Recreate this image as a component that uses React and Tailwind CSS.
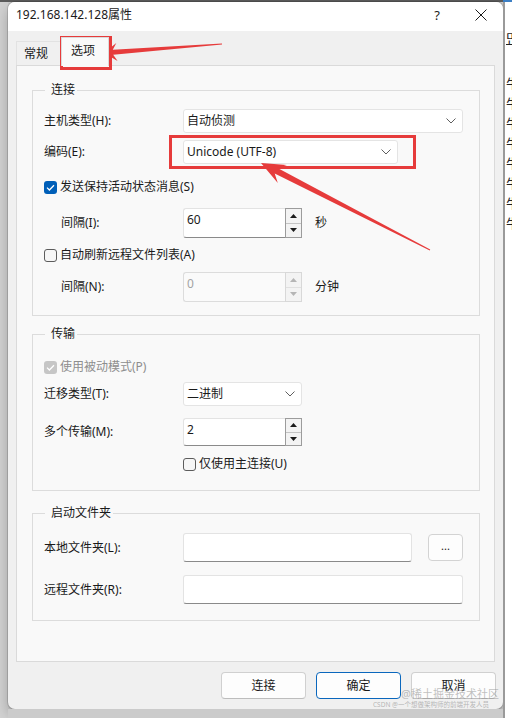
import React from "react";

const Chevron = () => (
  <svg width="10" height="6" viewBox="0 0 10 6" className="shrink-0">
    <path d="M0.5 0.5 L5 5 L9.5 0.5" fill="none" stroke="#5f5f5f" strokeWidth="1" />
  </svg>
);

const Combo = ({ value, className }) => (
  <div
    className={`h-[24px] flex items-center justify-between bg-white border border-[#e4e4e4] rounded-[3px] pl-[3px] pr-[6px] ${className}`}
  >
    <span>{value}</span>
    <Chevron />
  </div>
);

const Tri = ({ up, color }) => (
  <svg width="7" height="4" viewBox="0 0 7 4">
    <path d={up ? "M0 4 L3.5 0 L7 4Z" : "M0 0 L3.5 4 L7 0Z"} fill={color} />
  </svg>
);

const Spinner = ({ value, disabled, className }) => (
  <div className={`flex w-[119px] ${className}`}>
    <div
      className={`flex-1 border border-r-0 rounded-l-[3px] pl-[3px] pt-[3px] ${
        disabled
          ? "bg-[#fafafa] border-[#dcdcdc] text-[#a3a3a3]"
          : "bg-white border-[#e3e3e3] border-b-[#8a8a8a]"
      }`}
    >
      {value}
    </div>
    <div
      className={`w-[17px] flex flex-col border bg-[#f3f3f3] ${
        disabled ? "border-[#d8d8d8]" : "border-[#9c9c9c]"
      }`}
    >
      <div
        className={`flex-1 flex items-center justify-center border-b ${
          disabled ? "border-[#e0e0e0]" : "border-[#c4c4c4]"
        }`}
      >
        <Tri up color={disabled ? "#b5b5b5" : "#1a1a1a"} />
      </div>
      <div className="flex-1 flex items-center justify-center">
        <Tri color={disabled ? "#b5b5b5" : "#1a1a1a"} />
      </div>
    </div>
  </div>
);

const Check = ({ state }) => {
  if (state === "off") {
    return <div className="w-[13px] h-[13px] rounded-[3px] border border-[#5c5c5c] bg-[#f6f6f6] shrink-0" />;
  }
  return (
    <div
      className={`w-[13px] h-[13px] rounded-[3px] flex items-center justify-center shrink-0 ${
        state === "disabled" ? "bg-[#c6c6c6]" : "bg-[#005fb8]"
      }`}
    >
      <svg width="9" height="7" viewBox="0 0 9 7">
        <path d="M1 3.6 L3.4 6 L8 1.2" fill="none" stroke="white" strokeWidth="1.3" />
      </svg>
    </div>
  );
};

const TextBox = ({ className }) => (
  <div className={`bg-white border border-[#e3e3e3] border-b-[#8a8a8a] rounded-[3px] ${className}`} />
);

const arrowPoints = (tip, tail, headLen, neck, headHalf, shaftHalf, tailHalf) => {
  const dx = tip[0] - tail[0];
  const dy = tip[1] - tail[1];
  const len = Math.hypot(dx, dy);
  const ux = dx / len;
  const uy = dy / len;
  const nx = -uy;
  const ny = ux;
  const at = (along, side) => [tip[0] - ux * along + nx * side, tip[1] - uy * along + ny * side];
  const pts = [
    [tail[0] + nx * tailHalf, tail[1] + ny * tailHalf],
    at(neck, shaftHalf),
    at(headLen, headHalf),
    tip,
    at(headLen, -headHalf),
    at(neck, -shaftHalf),
    [tail[0] - nx * tailHalf, tail[1] - ny * tailHalf],
  ];
  return pts.map((q) => q.map((v) => v.toFixed(1)).join(",")).join(" ");
};

const sideChars = ["牛", "牛", "牛", "牛", "牛", "牛", "牛", "牛"];

export default function App() {
  return (
    <div className="relative w-[512px] h-[718px] overflow-hidden flex bg-[#cdcdcd] text-[12px] leading-[16px] text-[#1a1a1a] font-['Noto_Sans','Noto_Sans_CJK_SC',sans-serif]">
      {/* left strip behind the dialog */}
      <div className="w-[8px] shrink-0 flex flex-col">
        <div className="h-[2px] bg-[#5b5b5b]" />
        <div className="flex-1 bg-[#d2d2d2]" />
      </div>

      {/* dialog column */}
      <div className="w-[495px] shrink-0 flex flex-col">
        <div className="h-[2px] bg-[#5b5b5b]" />
        <div className="h-[707px] flex flex-col rounded-[7px] overflow-hidden bg-[#f0f0f0] shadow-[0_0_0_1px_rgba(0,0,0,0.14),0_6px_14px_rgba(0,0,0,0.25)]">
          {/* title bar */}
          <div className="h-[29px] shrink-0 bg-white flex items-center justify-between pl-[8px] pr-[16px] pb-[3px]">
            <span>192.168.142.128属性</span>
            <div className="flex items-center gap-[35px]">
              <span className="text-[13px]">?</span>
              <svg width="12" height="12" viewBox="0 0 12 12">
                <path d="M0.5 0.5 L11.5 11.5 M11.5 0.5 L0.5 11.5" stroke="#1a1a1a" strokeWidth="1" />
              </svg>
            </div>
          </div>

          {/* body */}
          <div className="flex-1 flex flex-col px-[8px] pt-[6px]">
            <div className="h-[28px] flex items-end">
              <div className="w-[45px] h-[24px] flex items-center pl-[7px] border border-b-0 border-[#e2e2e2] bg-[#f0f0f0]">
                常规
              </div>
              <div className="relative z-10 w-[48px] h-[29px] -mb-px flex items-center pl-[9px] pb-[2px] border border-b-0 border-[#dadada] bg-[#f9f9f9]">
                选项
              </div>
            </div>

            <div className="h-[597px] border border-[#dadada] bg-[#f9f9f9] pt-[16px] pl-[15px] pr-[14px]">
              {/* 连接 */}
              <fieldset className="border border-[#dcdcdc] pl-[11px] pb-[13px]">
                <legend className="ml-[1px] pl-[6px] pr-[2px] leading-[16px]">连接</legend>
                <div className="flex items-center h-[24px] mt-[11px]">
                  <span className="w-[139px]">主机类型(H):</span>
                  <Combo className="w-[280px]" value="自动侦测" />
                </div>
                <div className="flex items-center h-[24px] mt-[7px]">
                  <span className="w-[139px]">编码(E):</span>
                  <Combo className="w-[215px]" value="Unicode (UTF-8)" />
                </div>
                <div className="flex items-center gap-[3px] h-[16px] mt-[15px]">
                  <Check state="on" />
                  <span>发送保持活动状态消息(S)</span>
                </div>
                <div className="flex items-center h-[30px] mt-[13px]">
                  <span className="w-[122px] ml-[17px]">间隔(I):</span>
                  <Spinner className="h-[30px]" value="60" />
                  <span className="ml-[13px]">秒</span>
                </div>
                <div className="flex items-center gap-[3px] h-[16px] mt-[9px]">
                  <Check state="off" />
                  <span>自动刷新远程文件列表(A)</span>
                </div>
                <div className="flex items-center h-[30px] mt-[9px]">
                  <span className="w-[122px] ml-[17px]">间隔(N):</span>
                  <Spinner className="h-[30px]" value="0" disabled />
                  <span className="ml-[13px]">分钟</span>
                </div>
              </fieldset>

              {/* 传输 */}
              <fieldset className="border border-[#dcdcdc] pl-[11px] pb-[18px] mt-[10px]">
                <legend className="ml-[1px] pl-[6px] pr-[2px] leading-[16px]">传输</legend>
                <div className="flex items-center gap-[3px] h-[16px] mt-[17px] text-[#8e8e8e]">
                  <Check state="disabled" />
                  <span>使用被动模式(P)</span>
                </div>
                <div className="flex items-center h-[24px] mt-[7px]">
                  <span className="w-[139px]">迁移类型(T):</span>
                  <Combo className="w-[119px]" value="二进制" />
                </div>
                <div className="flex items-center h-[28px] mt-[12px]">
                  <span className="w-[139px]">多个传输(M):</span>
                  <Spinner className="h-[28px]" value="2" />
                </div>
                <div className="flex items-center gap-[3px] h-[16px] mt-[10px] ml-[139px]">
                  <Check state="off" />
                  <span>仅使用主连接(U)</span>
                </div>
              </fieldset>

              {/* 启动文件夹 */}
              <fieldset className="border border-[#dcdcdc] pl-[11px] pb-[16px] mt-[14px]">
                <legend className="ml-[1px] pl-[6px] pr-[2px] leading-[16px]">启动文件夹</legend>
                <div className="flex items-center h-[29px] mt-[12px]">
                  <span className="w-[139px]">本地文件夹(L):</span>
                  <TextBox className="w-[229px] h-[29px]" />
                  <div className="ml-[16px] w-[35px] h-[27px] flex items-center justify-center rounded-[4px] border border-[#d3d3d3] bg-[#fdfdfd] text-[11px] pb-[3px]">
                    ...
                  </div>
                </div>
                <div className="flex items-center h-[29px] mt-[13px]">
                  <span className="w-[139px]">远程文件夹(R):</span>
                  <TextBox className="w-[280px] h-[29px]" />
                </div>
              </fieldset>
            </div>

            {/* buttons */}
            <div className="flex justify-end gap-[10px] mt-[10px] -mr-px">
              <div className="w-[85px] h-[27px] flex items-center justify-center rounded-[4px] border border-[#d0d0d0] border-b-[#bdbdbd] bg-[#fdfdfd]">
                连接
              </div>
              <div className="w-[85px] h-[27px] flex items-center justify-center rounded-[4px] border border-[#0a67bd] bg-[#fdfdfd]">
                确定
              </div>
              <div className="w-[85px] h-[27px] flex items-center justify-center rounded-[4px] border border-[#d0d0d0] border-b-[#bdbdbd] bg-[#fdfdfd]">
                取消
              </div>
            </div>
          </div>
        </div>
        <div className="flex-1 bg-[#cbcbcb]" />
      </div>

      {/* right strip: window behind */}
      <div className="flex-1 min-w-0 flex flex-col">
        <div className="h-[2px] bg-[#3c7fc4]" />
        <div className="flex-1 bg-white border-l-2 border-[#9a9a9a] overflow-hidden pl-[1px] text-[13px] leading-[20px] text-[#222]">
          <div className="mt-[26px] underline">민</div>
          <div className="mt-[25px] flex flex-col">
            {sideChars.map((c, i) => (
              <span key={i}>{c}</span>
            ))}
          </div>
        </div>
      </div>

      {/* red annotations */}
      <div className="absolute left-[60px] top-[36px] w-[52px] h-[34px] border-[3px] border-[#e63b3b]" />
      <div className="absolute left-[169px] top-[135px] w-[247px] h-[34px] border-[3px] border-[#e63b3b]" />
      <svg className="absolute left-0 top-0 pointer-events-none" width="512" height="718">
        <polygon points={arrowPoints([104, 53], [222, 44], 13, 9, 9, 2.5, 0.5)} fill="#e63b3b" />
        <polygon points={arrowPoints([261, 163], [430, 250], 24, 17, 10, 3.2, 0.5)} fill="#e63b3b" />
      </svg>

      {/* watermark */}
      <div className="absolute left-[401px] top-[687px] text-[11px] leading-[14px] text-[rgba(140,140,140,0.55)]">
        @稀土掘金技术社区
      </div>
      <div className="absolute left-[373px] top-[701px] text-[6.5px] leading-[8px] text-[rgba(140,140,140,0.6)]">
        CSDN @一个想做架构师的前端开发人员
      </div>
    </div>
  );
}
